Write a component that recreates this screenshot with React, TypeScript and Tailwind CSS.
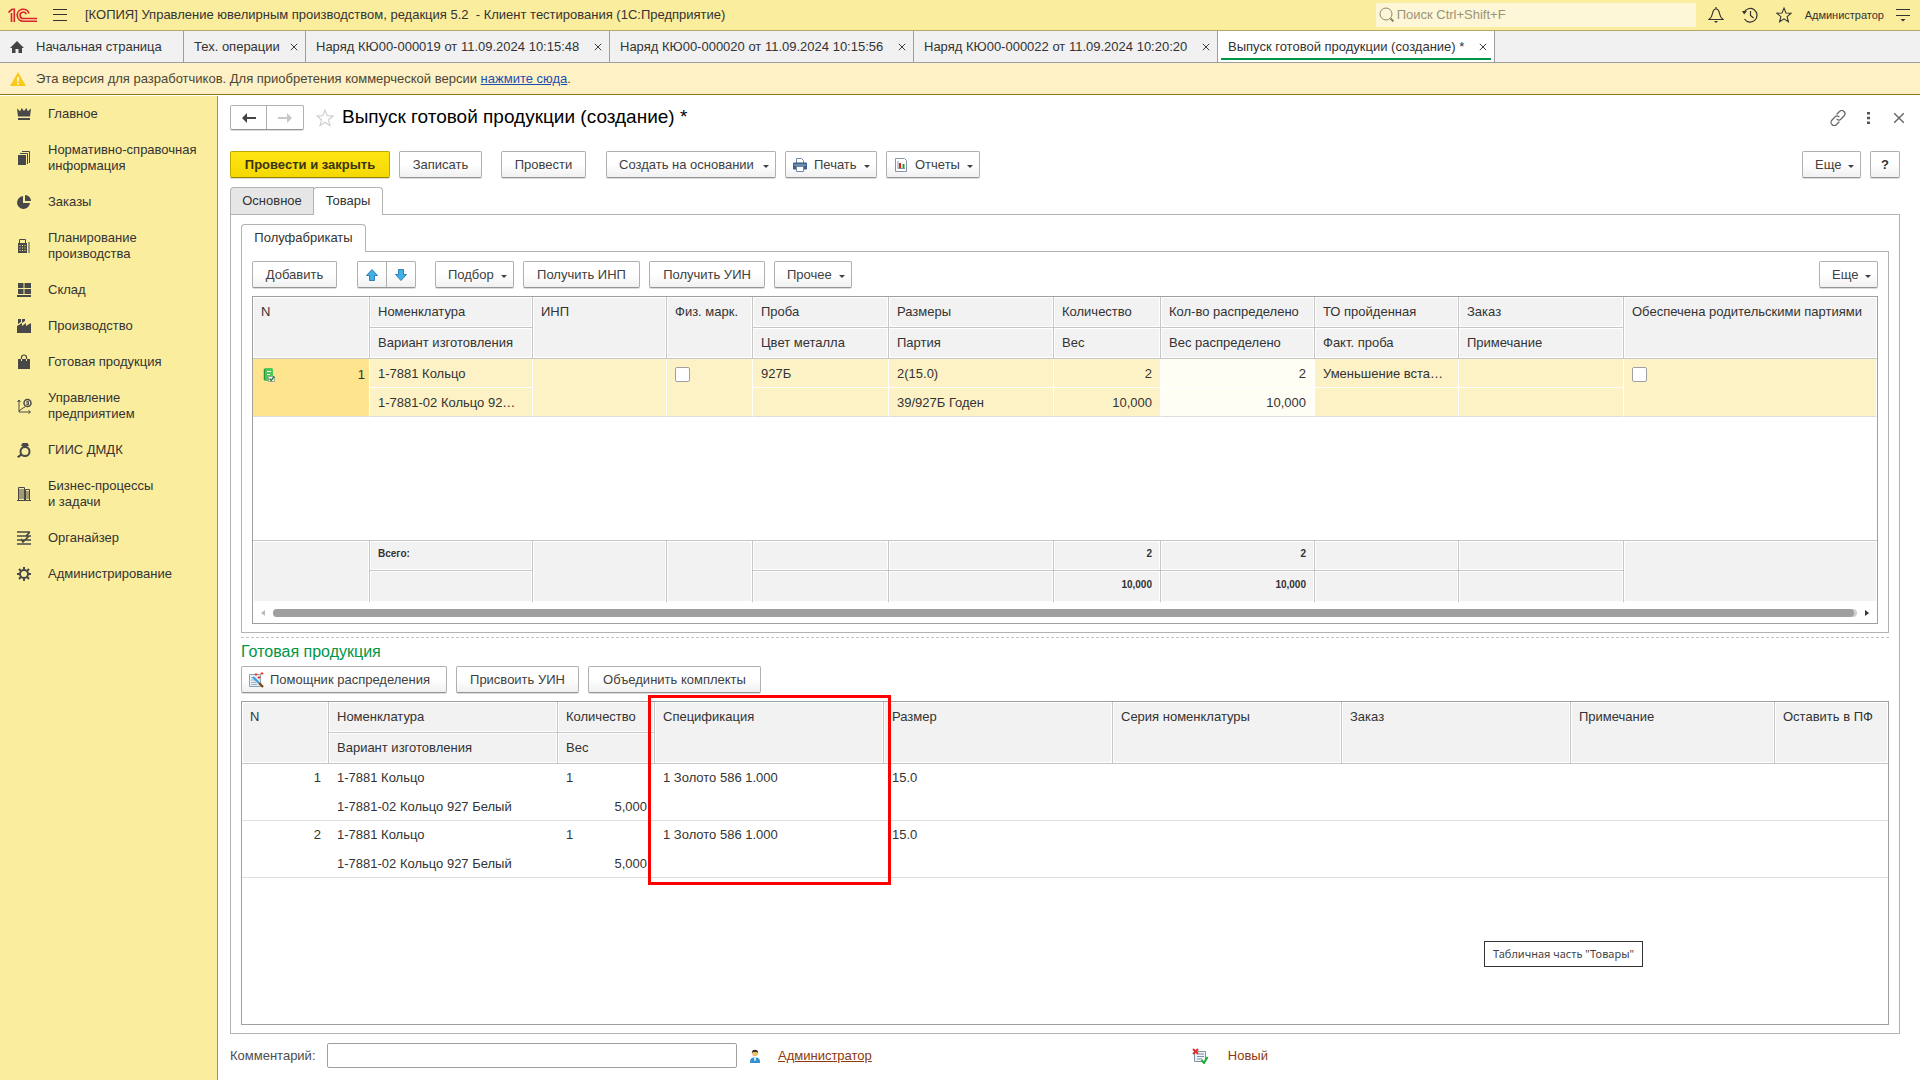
import type { ReactNode } from "react";

const glyphs: Record<string, ReactNode> = {
  crown: <><path d="M0 1.5 3.2 4.2 4.6 1 7 4 9.4 1l1.4 3.2L14 1.5 13 9.5H1z" /><path d="M1 11h12v2H1z" /></>,
  docs: <><path d="M1 4h8v10H1z" /><path d="M3 2.500h7.500V13M5 .500h7.500V12" fill="none" stroke="currentColor" /></>,
  pie: <><path d="M6 1a6.500 6.500 0 1 0 7 7H6z" /><path d="M8 0a6 6 0 0 1 6 6H8z" /></>,
  calc: (
    <>
      <path d="M2.500.500h6v4h-6z" fill="none" stroke="currentColor" />
      <path d="M1 4h9v10H1zM11.500 3h1v11h-1z" />
      <path d="M2.500 6.500h6M2.500 9h6M2.500 11.500h6" stroke="#fbed9e" strokeDasharray="1 1.500" />
    </>
  ),
  store: <path d="M1 0h5.500v5H1zM7.500 0H14v5H7.500zM1 6h5.500v5H1zM7.500 6H14v5H7.500zM0 12h14v2H0z" />,
  factory: <path d="M0 14V7l5-3v3l4-3v3l5-3v10zM1 0h3v3L1 5zM5 0h3v2L5 4z" />,
  bag: <><path d="M1 4h12v10H1z" /><path d="M4.500 4V2.500a2.500 2.500 0 0 1 5 0V4" fill="none" stroke="currentColor" strokeWidth="1.200" /><path d="M4.500 4v2M9.500 4v2" stroke="#fbed9e" /></>,
  plan: (
    <>
      <path d="M2 1v12h11M.500 3 2 1l1.500 2M11.500 11.500 13.500 13l-2 1.500M2 12l4-3 2-1" fill="none" stroke="currentColor" />
      <circle cx="10.500" cy="4" r="3.500" fill="none" stroke="currentColor" strokeWidth="1.500" />
      <path d="M9.500 2.500h2v3h-2M9 4h3" fill="none" stroke="currentColor" />
    </>
  ),
  ring: (
    <>
      <circle cx="8" cy="8.500" r="4.500" fill="none" stroke="currentColor" strokeWidth="2" />
      <path d="M5.500 0h5L12 2.500 8 5 4 2.500zM4 10.500l1.500 1.500L1.500 15 0 13.500z" />
    </>
  ),
  office: (
    <>
      <path d="M1.500.500h6v13h-6zM8.500 2.500h4v11h-4zM0 13.500h14" fill="none" stroke="currentColor" />
      <path d="M2 3h5M2 5h5M2 7h5M2 9h5M2 11h5M9 5h3M9 7h3M9 9h3M9 11h3" stroke="currentColor" />
    </>
  ),
  tasks: <path d="M0 1h13M0 5h14M0 9h14M0 13h14M13 1 9 5M4 8l2 3 6-6" fill="none" stroke="currentColor" strokeWidth="1.700" />,
  gear: (
    <>
      <circle cx="7" cy="7" r="4" fill="none" stroke="currentColor" strokeWidth="2" />
      <path d="M7 0v3M7 11v3M0 7h3M11 7h3M2 2l2 2M10 10l2 2M12 2l-2 2M4 10l-2 2" stroke="currentColor" strokeWidth="2" />
    </>
  ),
};

const sections = [
  { icon: "crown", label: "Главное" },
  { icon: "docs", label: "Нормативно-справочная информация" },
  { icon: "pie", label: "Заказы" },
  { icon: "calc", label: "Планирование производства", wrap: true },
  { icon: "store", label: "Склад" },
  { icon: "factory", label: "Производство" },
  { icon: "bag", label: "Готовая продукция" },
  { icon: "plan", label: "Управление предприятием", wrap: true },
  { icon: "ring", label: "ГИИС ДМДК" },
  { icon: "office", label: "Бизнес-процессы и задачи", wrap: true },
  { icon: "tasks", label: "Органайзер" },
  { icon: "gear", label: "Администрирование" },
];

const openTabs = [
  { label: "Тех. операции", w: "min-w-[122px]" },
  { label: "Наряд КЮ00-000019 от 11.09.2024 10:15:48", w: "min-w-[304px]" },
  { label: "Наряд КЮ00-000020 от 11.09.2024 10:15:56", w: "min-w-[304px]" },
  { label: "Наряд КЮ00-000022 от 11.09.2024 10:20:20", w: "min-w-[304px]" },
];

function Logo() {
  return (
    <svg className="h-4 w-[30px] shrink-0" viewBox="0 0 30 16" fill="none" stroke="#d8232a" strokeWidth="1.600" aria-hidden="true">
      <path d="M.500 5.500 4 2.300h2.300V15M3.500 6v9" />
      <path d="M21 6.500A6 6 0 1 0 15.500 14.200H29" />
      <path d="M18.300 7.200A3.200 3.200 0 1 0 15.500 11.500H29" />
    </svg>
  );
}

function Cross({ className = "" }: { className?: string }) {
  return (
    <svg className={className} viewBox="0 0 10 10" fill="none" stroke="currentColor" strokeWidth="1.200" aria-hidden="true">
      <path d="M1 1l8 8M9 1 1 9" />
    </svg>
  );
}

function Caret() {
  return (
    <svg className="mt-1 ml-1.5 h-[3px] w-1.5" viewBox="0 0 6 3" fill="currentColor" aria-hidden="true">
      <path d="M0 0h6L3 3z" />
    </svg>
  );
}

function Btn({ children, icon, menu, label, w }: { children: ReactNode; icon?: ReactNode; menu?: boolean; label?: string; w: string }) {
  return (
    <button
      type="button"
      aria-label={label}
      className={
        "flex h-[27px] items-center rounded-xs border border-[#b0b0b0] border-b-[#959595] bg-linear-to-b from-white from-50% to-[#f0f0f0] whitespace-nowrap text-[#404040] shadow-[0_1px_0_#dcdcdc] " +
        w +
        (icon ? " pl-1.5" : " pl-3") +
        (menu ? " justify-between pr-1.5" : icon ? " pr-3" : " justify-center pr-3")
      }
    >
      <span className="flex items-center gap-1.5">
        {icon}
        {children}
      </span>
      {menu && <Caret />}
    </button>
  );
}

function PrinterIcon() {
  return (
    <svg className="h-4 w-4" viewBox="0 0 16 16" aria-hidden="true">
      <path d="M4.500 6V1.500h5l2 2V6" fill="#fff" stroke="#6f87a3" />
      <rect x="1" y="5.500" width="14" height="7" rx="1" fill="#3d6189" />
      <path d="M2 8h12" stroke="#9db5cf" />
      <path d="M4.500 9.500h7v5h-7z" fill="#fff" stroke="#6f87a3" />
    </svg>
  );
}

function ReportIcon() {
  return (
    <svg className="h-4 w-4" viewBox="0 0 16 16" aria-hidden="true">
      <path d="M2.500 1.500h9l2 2v11h-11z" fill="#fff" stroke="#8494a5" />
      <path d="M5 4v7.500h7" fill="none" stroke="#8494a5" />
      <path d="M6 6h2v5H6z" fill="#e02020" />
      <path d="M9.500 7h2v4h-2z" fill="#1fa52c" />
    </svg>
  );
}

function WizardIcon() {
  return (
    <svg className="h-4 w-4" viewBox="0 0 16 16" aria-hidden="true">
      <path d="M1.500 2.500h11v12h-11z" fill="#e9f1f7" stroke="#8ba0b3" />
      <path d="M3 5.500h4M3 8h4M3 10.500h5M3 12.500h6" stroke="#9db0c0" />
      <path d="M5 5l6 6" stroke="#3fa0e0" strokeWidth="2.400" />
      <path d="m11 11 4 4" stroke="#7b4a12" strokeWidth="2.400" />
      <path d="M8 1v3M6.500 2.500h3M14 0v3M12.500 1.500h3M11 4v3M9.500 5.500h3" stroke="#ee3a2c" />
    </svg>
  );
}

function ArrowIcon({ down }: { down?: boolean }) {
  return (
    <svg className={down ? "h-3.5 w-3.5 rotate-180" : "h-3.5 w-3.5"} viewBox="0 0 14 14" aria-hidden="true">
      <path d="M7 1.500 12.500 7.500H9.500v5h-5v-5h-3z" fill="#41aee8" stroke="#2f80b5" strokeLinejoin="round" />
    </svg>
  );
}

function RowIcon() {
  return (
    <svg className="ml-0.5 h-4 w-3.5" viewBox="0 0 14 16" aria-hidden="true">
      <rect x="1" y="1" width="9" height="13" rx="1.500" fill="#4fc85a" />
      <path d="M1.500 2v11" stroke="#2c9a3a" strokeWidth="1.500" />
      <path d="M4 4.500h4M4 7.500h3" stroke="#fff" />
      <path d="M5.500 9.500h6v5h-6z" fill="#f3fff3" stroke="#9aa79b" />
      <path d="m6.500 11.500 1.700 2 3-4" fill="none" stroke="#1f7d2c" strokeWidth="1.300" />
    </svg>
  );
}

type Col = { w: string; top: string; bottom?: string };

const goodsCols: Col[] = [
  { w: "w-[117px]", top: "N" },
  { w: "w-[163px]", top: "Номенклатура", bottom: "Вариант изготовления" },
  { w: "w-[134px]", top: "ИНП" },
  { w: "w-[86px]", top: "Физ. марк." },
  { w: "w-[136px]", top: "Проба", bottom: "Цвет металла" },
  { w: "w-[165px]", top: "Размеры", bottom: "Партия" },
  { w: "w-[107px]", top: "Количество", bottom: "Вес" },
  { w: "w-[154px]", top: "Кол-во распределено", bottom: "Вес распределено" },
  { w: "w-[144px]", top: "ТО пройденная", bottom: "Факт. проба" },
  { w: "w-[165px]", top: "Заказ", bottom: "Примечание" },
  { w: "w-[253px]", top: "Обеспечена родительскими партиями" },
];

const productCols: Col[] = [
  { w: "w-[87px]", top: "N" },
  { w: "w-[229px]", top: "Номенклатура", bottom: "Вариант изготовления" },
  { w: "w-[97px]", top: "Количество", bottom: "Вес" },
  { w: "w-[229px]", top: "Спецификация" },
  { w: "w-[229px]", top: "Размер" },
  { w: "w-[229px]", top: "Серия номенклатуры" },
  { w: "w-[229px]", top: "Заказ" },
  { w: "w-[204px]", top: "Примечание" },
  { w: "w-[113px]", top: "Оставить в ПФ" },
];

const headCell =
  "h-[31px] overflow-hidden border-r border-b border-[#c6c6c6] bg-[#f2f2f2] px-2 text-left font-normal whitespace-nowrap shadow-[inset_0_0_0_1px_#fff]";

function Head({ cols }: { cols: Col[] }) {
  return (
    <>
      <colgroup>
        {cols.map((c) => (
          <col key={c.top} className={c.w} />
        ))}
      </colgroup>
      <thead>
        <tr>
          {cols.map((c) =>
            c.bottom ? (
              <th key={c.top} scope="col" className={headCell}>
                {c.top}
              </th>
            ) : (
              <th key={c.top} scope="col" rowSpan={2} className={headCell + " pt-[7px] align-top last:border-r-0"}>
                {c.top}
              </th>
            ),
          )}
        </tr>
        <tr>
          {cols
            .filter((c) => c.bottom)
            .map((c) => (
              <th key={c.top} scope="col" className={headCell}>
                {c.bottom}
              </th>
            ))}
        </tr>
      </thead>
    </>
  );
}

function Cell({ children, right, span, bottom, tone = "bg-[#fdf2c6]", pad = "px-2" }: { children?: ReactNode; right?: boolean; span?: boolean; bottom?: boolean; tone?: string; pad?: string }) {
  return (
    <td
      rowSpan={span ? 2 : 1}
      className={
        "h-[29px] overflow-hidden border-r border-b border-r-white whitespace-nowrap " +
        pad +
        " " +
        tone +
        (right ? " text-right" : "") +
        (span ? " pt-2 align-top" : " pt-0.5") +
        (span || bottom ? " border-b-[#dedede]" : " border-b-white")
      }
    >
      {children}
    </td>
  );
}

function Total({ children, top, span, left }: { children?: ReactNode; top?: boolean; span?: boolean; left?: boolean }) {
  return (
    <td
      rowSpan={span ? 2 : 1}
      className={
        "h-[31px] border-r border-[#c6c6c6] bg-[#f2f2f2] px-2 pb-1 text-[10px] font-bold shadow-[inset_0_0_0_1px_#fff] " +
        (left ? "text-left" : "text-right") +
        (top || span ? " border-t" : "") +
        (top ? " border-b" : "") +
        (span ? " last:border-r-0" : "")
      }
    >
      {children}
    </td>
  );
}

function GoodsTable() {
  const box = "block h-[15px] w-[15px] appearance-none rounded-xs border border-[#a0a0a0] bg-white";
  return (
    <div className="flex flex-col border border-[#a0a0a0] pb-1.5">
      <table className="w-full table-fixed border-separate border-spacing-0">
        <Head cols={goodsCols} />
        <tbody>
          <tr>
            <Cell span tone="bg-[#ffe48f]" pad="pl-2 pr-1">
              <span className="flex justify-between">
                <RowIcon />1
              </span>
            </Cell>
            <Cell>1-7881 Кольцо</Cell>
            <Cell span />
            <Cell span>
              <input type="checkbox" aria-label="Физ. марк." className={box} />
            </Cell>
            <Cell>927Б</Cell>
            <Cell>2(15.0)</Cell>
            <Cell right>2</Cell>
            <Cell right tone="bg-[#fffef4]">2</Cell>
            <Cell>Уменьшение вста…</Cell>
            <Cell />
            <Cell span>
              <input type="checkbox" aria-label="Обеспечена родительскими партиями" className={box} />
            </Cell>
          </tr>
          <tr>
            <Cell bottom>1-7881-02 Кольцо 92…</Cell>
            <Cell bottom />
            <Cell bottom>39/927Б Годен</Cell>
            <Cell bottom right>10,000</Cell>
            <Cell bottom right tone="bg-[#fffef4]">10,000</Cell>
            <Cell bottom />
            <Cell bottom />
          </tr>
          <tr>
            <td colSpan={11} className="h-[123px]" />
          </tr>
        </tbody>
        <tfoot>
          <tr>
            <Total span />
            <Total top left>Всего:</Total>
            <Total span />
            <Total span />
            <Total top />
            <Total top />
            <Total top>2</Total>
            <Total top>2</Total>
            <Total top />
            <Total top />
            <Total span />
          </tr>
          <tr>
            <Total />
            <Total />
            <Total />
            <Total>10,000</Total>
            <Total>10,000</Total>
            <Total />
            <Total />
          </tr>
        </tfoot>
      </table>
      <div className="mt-[7px] flex h-2 items-center gap-2 px-2">
        <svg className="h-1.5 w-1" viewBox="0 0 4 6" fill="#bbb" aria-hidden="true"><path d="M4 0v6L0 3z" /></svg>
        <div className="h-2 flex-1 rounded-full bg-[#cfcfcf] pr-[3px]">
          <div className="h-2 rounded-full bg-[#9f9f9f]" />
        </div>
        <svg className="h-1.5 w-1" viewBox="0 0 4 6" fill="#333" aria-hidden="true"><path d="M0 0v6l4-3z" /></svg>
      </div>
    </div>
  );
}

function ProductTable() {
  return (
    <div className="relative flex-1 border border-[#a0a0a0]">
      <table className="w-full table-fixed border-separate border-spacing-0">
        <Head cols={productCols} />
        <tbody>
          {[1, 2].map((n) => (
            <tr key={n} className="align-top">
              <td className="h-[57px] border-b border-[#dedede] px-2 pt-1.5 text-right">{n}</td>
              <td className="border-b border-[#dedede] px-2 pt-1.5">
                <div>1-7881 Кольцо</div>
                <div className="mt-[13px]">1-7881-02 Кольцо 927 Белый</div>
              </td>
              <td className="border-b border-[#dedede] px-2 pt-1.5">
                <div>1</div>
                <div className="mt-[13px] text-right">5,000</div>
              </td>
              <td className="border-b border-[#dedede] px-2 pt-1.5">1 Золото 586 1.000</td>
              <td className="border-b border-[#dedede] px-2 pt-1.5">15.0</td>
              <td className="border-b border-[#dedede]" />
              <td className="border-b border-[#dedede]" />
              <td className="border-b border-[#dedede]" />
              <td className="border-b border-[#dedede]" />
            </tr>
          ))}
        </tbody>
      </table>
      <div className="pointer-events-none absolute top-[-7px] left-[24.650%] h-[190px] w-[14.800%] border-3 border-[#ff0000]" />
      <div role="tooltip" className="absolute right-[245px] bottom-[57px] border border-[#333] bg-white px-2 py-[3px] font-['Noto_Sans',sans-serif] text-[11px] leading-[18px] text-[#444]">
        Табличная часть "Товары"
      </div>
    </div>
  );
}

function TopBar() {
  return (
    <header className="flex h-[31px] items-center border-b border-[#b3a866] bg-[#fbed9e] pr-2.5 pl-2 text-[#333]">
      <Logo />
      <button type="button" aria-label="Меню" className="ml-[15px]">
        <svg className="h-3.5 w-3.5" viewBox="0 0 14 14" stroke="#333" aria-hidden="true"><path d="M0 1.500h14M0 6.500h14M0 12.500h14" /></svg>
      </button>
      <div className="ml-[18px] flex-1 whitespace-pre">[КОПИЯ] Управление ювелирным производством, редакция 5.2  - Клиент тестирования (1С:Предприятие)</div>
      <label className="flex h-6 w-80 items-center rounded-xs bg-[#fdf7d7] pl-[3px]">
        <svg className="h-4 w-4" viewBox="0 0 16 16" fill="none" stroke="#8d876b" aria-hidden="true">
          <circle cx="7" cy="7" r="6" />
          <path d="m11.500 11.500 3 3" strokeWidth="2" />
        </svg>
        <input type="search" aria-label="Поиск" placeholder="Поиск Ctrl+Shift+F" className="ml-0.5 min-w-0 flex-1 bg-transparent outline-none placeholder:text-[#9a9479]" />
      </label>
      <button type="button" aria-label="Уведомления" className="ml-3">
        <svg className="h-4 w-4" viewBox="0 0 16 16" fill="none" stroke="#333" strokeWidth="1.200" aria-hidden="true">
          <path d="M1 12.500c2.500-2 3-3 3.500-6C5 3.500 6 2 8 2s3 1.500 3.500 4.500c.500 3 1 4 3.500 6zM8 0v2" />
          <path d="M6 14h4l-2 2z" fill="#333" stroke="none" />
        </svg>
      </button>
      <button type="button" aria-label="История" className="ml-[18px]">
        <svg className="h-4 w-4" viewBox="0 0 16 16" fill="none" stroke="#333" strokeWidth="1.200" aria-hidden="true">
          <path d="M2 5.500A6.800 6.800 0 1 1 2.500 12M8.500 4v4.500l3 2.500" />
          <path d="M0 4h5L2.200 7.500z" fill="#333" stroke="none" />
        </svg>
      </button>
      <button type="button" aria-label="Избранное" className="ml-[18px]">
        <Star className="h-4 w-4 text-[#333]" />
      </button>
      <button type="button" className="ml-[13px] text-[11px]">Администратор</button>
      <button type="button" aria-label="Настройки" className="ml-3">
        <svg className="h-3.5 w-3.5" viewBox="0 0 14 14" stroke="#333" aria-hidden="true">
          <path d="M0 1.500h14M0 7.500h14" />
          <path d="M4.500 11h5L7 13.500z" fill="#333" stroke="none" />
        </svg>
      </button>
    </header>
  );
}

function Star({ className }: { className: string }) {
  return (
    <svg className={className} viewBox="0 0 18 18" fill="none" stroke="currentColor" strokeWidth="1.200" aria-hidden="true">
      <path d="m9 1.200 2.200 5.500 5.800.300-4.500 3.800 1.500 5.800L9 13.300l-5 3.300 1.500-5.800L1 7l5.800-.300z" />
    </svg>
  );
}

function WindowTabs() {
  return (
    <nav className="flex h-8 border-b border-[#9d9d9d] bg-[#f1f1f1] whitespace-nowrap text-[#333]">
      <button type="button" className="flex min-w-[184px] items-center border-r border-[#9d9d9d] pr-4 pl-2.5">
        <svg className="mr-3 h-3.5 w-3.5" viewBox="0 0 14 14" fill="#444" aria-hidden="true">
          <path d="M7 1 0 8h2v5h3.500V9h3v4H12V8h2z" />
        </svg>
        Начальная страница
      </button>
      {openTabs.map((t) => (
        <div key={t.label} className={"flex items-center justify-between border-r border-[#9d9d9d] pr-[7px] pl-2.5 " + t.w}>
          <span>{t.label}</span>
          <button type="button" aria-label="Закрыть вкладку" className="ml-2"><Cross className="h-2 w-2" /></button>
        </div>
      ))}
      <div className="flex min-w-[277px] border-r border-[#9d9d9d] bg-white px-[3px] pb-0.5">
        <div className="flex flex-1 items-center justify-between border-b-2 border-[#009646] pt-1 pr-1 pl-[7px]">
          <span>Выпуск готовой продукции (создание) *</span>
          <button type="button" aria-label="Закрыть вкладку" className="ml-2"><Cross className="h-2 w-2" /></button>
        </div>
      </div>
    </nav>
  );
}

export default function App() {
  return (
    <div className="flex min-h-screen flex-col bg-white font-['Liberation_Sans',Arial,sans-serif] text-[13px] leading-4 text-[#333]">
      <TopBar />
      <WindowTabs />
      <div className="flex h-8 items-center border-b border-[#8f7717] bg-[#fdf1c5] pl-2.5 text-[#4d4633]">
        <svg className="mr-2.5 h-3.5 w-4" viewBox="0 0 16 14" aria-hidden="true">
          <path d="M8 0 16 14H0z" fill="#fbc91b" />
          <path d="M8 5v4.500M8 10.800v1.700" stroke="#fff" strokeWidth="1.600" />
        </svg>
        <span>
          Эта версия для разработчиков. Для приобретения коммерческой версии{" "}
          <a href="#buy" className="text-[#1a4fb0] underline">нажмите сюда</a>.
        </span>
      </div>

      <div className="flex flex-1 pt-px">
        <aside className="w-[218px] shrink-0 border-r border-[#9c9465] bg-[#fbed9e]">
          <ul>
            {sections.map((s) => (
              <li key={s.label}>
                <button type="button" className="flex w-full items-center gap-[17px] py-2.5 pr-3 pl-[17px] text-left">
                  <svg className="h-3.5 w-3.5 shrink-0 overflow-visible text-[#484848]" viewBox="0 0 14 14" fill="currentColor" aria-hidden="true">{glyphs[s.icon]}</svg>
                  <span className={s.wrap ? "w-28" : ""}>{s.label}</span>
                </button>
              </li>
            ))}
          </ul>
        </aside>

        <main className="flex min-w-0 flex-1 flex-col pt-[9px] pr-5 pb-3 pl-3">
          <div className="-mr-[5px] flex h-[25px] items-center">
            <div className="flex h-[25px] rounded-xs border border-[#b0b0b0] border-b-[#959595] shadow-[0_1px_0_#dcdcdc]">
              <button type="button" aria-label="Назад" className="flex w-9 items-center justify-center border-r border-[#b0b0b0] text-[#444]">
                <svg className="h-3 w-3.5" viewBox="0 0 14 12" aria-hidden="true"><path d="M0 6l5-5v4h9v2H5v4z" fill="currentColor" /></svg>
              </button>
              <button type="button" aria-label="Вперед" className="flex w-9 items-center justify-center text-[#c8c8c8]">
                <svg className="h-3 w-3.5" viewBox="0 0 14 12" aria-hidden="true"><path d="M14 6 9 1v4H0v2h9v4z" fill="currentColor" /></svg>
              </button>
            </div>
            <button type="button" aria-label="В избранное" className="ml-3"><Star className="h-[18px] w-[18px] text-[#d0d0d0]" /></button>
            <h1 className="ml-2 flex-1 pb-0.5 text-[19px] leading-6 text-black">Выпуск готовой продукции (создание) *</h1>
            <button type="button" aria-label="Ссылка" className="text-[#666]">
              <svg className="h-4 w-4" viewBox="0 0 16 16" fill="none" stroke="currentColor" strokeWidth="1.200" strokeLinecap="round" aria-hidden="true">
                <path d="M7 4l2.500-2.500a3 3 0 0 1 4.500 4.500L11 9a3 3 0 0 1-4 .300M9 12l-2.500 2.500A3 3 0 0 1 2 10l3-3a3 3 0 0 1 4-.300" />
              </svg>
            </button>
            <button type="button" aria-label="Дополнительно" className="ml-[21px] text-[#555]">
              <svg className="h-3 w-[3px]" viewBox="0 0 3 12" fill="currentColor" aria-hidden="true"><path d="M0 0h3v2.500H0zM0 4.700h3v2.500H0zM0 9.400h3V12H0z" /></svg>
            </button>
            <button type="button" aria-label="Закрыть" className="ml-[23px] text-[#666]"><Cross className="h-3 w-3" /></button>
          </div>

          <div className="mt-[21px] flex">
            <button type="button" className="h-[27px] min-w-40 rounded-xs border border-[#c0a800] border-b-[#988500] bg-linear-to-b from-[#ffe514] to-[#f5d800] px-2.5 font-bold text-[#3a3412] shadow-[0_1px_0_#dcdcdc]">
              Провести и закрыть
            </button>
            <div className="ml-[9px]"><Btn w="min-w-[83px]">Записать</Btn></div>
            <div className="ml-[19px]"><Btn w="min-w-[85px]">Провести</Btn></div>
            <div className="ml-5 flex gap-[9px]">
              <Btn menu w="min-w-[170px]">Создать на основании</Btn>
              <Btn menu w="min-w-[92px]" icon={<PrinterIcon />}>Печать</Btn>
              <Btn menu w="min-w-[94px]" icon={<ReportIcon />}>Отчеты</Btn>
            </div>
            <div className="ml-auto flex gap-[9px]">
              <Btn menu w="min-w-[59px]">Еще</Btn>
              <button type="button" aria-label="Справка" className="h-[27px] w-[30px] rounded-xs border border-[#b0b0b0] border-b-[#959595] bg-linear-to-b from-white from-50% to-[#f0f0f0] font-bold text-[#333] shadow-[0_1px_0_#dcdcdc]">?</button>
            </div>
          </div>

          <div className="mt-[9px] flex" role="tablist">
            <button type="button" role="tab" aria-selected="false" className="h-[27px] min-w-[84px] rounded-tl-sm border border-b-0 border-[#b3b3b3] bg-[#e6e6e6] px-[11px]">Основное</button>
            <button type="button" role="tab" aria-selected="true" className="relative -mb-px -ml-px h-7 min-w-[70px] rounded-t-sm border border-b-0 border-[#b3b3b3] bg-white px-[11px] pb-0.5">Товары</button>
          </div>

          <section className="flex flex-1 flex-col border border-[#b3b3b3] px-2.5 pt-[9px] pb-2">
            <div className="flex" role="tablist">
              <button type="button" role="tab" aria-selected="true" className="relative -mb-px h-7 min-w-[125px] rounded-t-sm border border-b-0 border-[#b3b3b3] bg-white px-[11px] pb-0.5">Полуфабрикаты</button>
            </div>
            <div className="border border-[#b3b3b3] px-2.5 pt-[9px] pb-2">
              <div className="mb-2 flex">
                <Btn w="min-w-[85px]">Добавить</Btn>
                <div className="ml-5 flex h-[27px] rounded-xs border border-[#b0b0b0] border-b-[#959595] bg-linear-to-b from-white from-50% to-[#f0f0f0] shadow-[0_1px_0_#dcdcdc]">
                  <button type="button" aria-label="Переместить вверх" className="flex w-[29px] items-center justify-center border-r border-[#b0b0b0]"><ArrowIcon /></button>
                  <button type="button" aria-label="Переместить вниз" className="flex w-7 items-center justify-center"><ArrowIcon down /></button>
                </div>
                <div className="ml-[19px] flex gap-[9px]">
                  <Btn menu w="min-w-[79px]">Подбор</Btn>
                  <Btn w="min-w-[117px]">Получить ИНП</Btn>
                  <Btn w="min-w-[116px]">Получить УИН</Btn>
                  <Btn menu w="min-w-[78px]">Прочее</Btn>
                </div>
                <div className="ml-auto"><Btn menu w="min-w-[59px]">Еще</Btn></div>
              </div>
              <GoodsTable />
            </div>

            <div className="mt-1 border-t border-dashed border-[#c4c4c4]" />
            <h2 className="mt-1 text-base leading-5 text-[#009646]">Готовая продукция</h2>
            <div className="mt-1 mb-2 flex gap-[9px]">
              <Btn w="min-w-[206px]" icon={<WizardIcon />}>Помощник распределения</Btn>
              <Btn w="min-w-[123px]">Присвоить УИН</Btn>
              <Btn w="min-w-[173px]">Объединить комплекты</Btn>
            </div>
            <ProductTable />
          </section>

          <div className="mt-[9px] flex h-[25px] items-center">
            <label htmlFor="comment" className="w-[97px] text-[#4d4d4d]">Комментарий:</label>
            <input id="comment" type="text" className="h-[25px] w-[410px] rounded-xs border border-[#a0a0a0] px-2" />
            <svg className="ml-3 h-3.5 w-3" viewBox="0 0 12 14" aria-hidden="true">
              <path d="M1 14c0-4 1-5.500 5-5.500s5 1.500 5 5.500z" fill="#3191cf" />
              <path d="M5 8.500h2L6.500 12h-1z" fill="#fff" />
              <circle cx="6" cy="4.500" r="2.800" fill="#f0bd6c" />
              <path d="M2.800 4.500C2.800 1.500 4 .700 6 .700s3.200.800 3.200 3.800L8 3H4z" fill="#3c3320" />
            </svg>
            <a href="#user" className="ml-[17px] text-[#8c3a0c] underline">Администратор</a>
            <div className="ml-80 flex items-center text-[#8c3a0c]">
              <svg className="mr-5 h-4 w-4" viewBox="0 0 16 16" aria-hidden="true">
                <path d="M2.500 3.500h11v10h-11z" fill="#eef3f7" stroke="#8094a6" />
                <path d="M6 6h6M5 8.500h7M5 11h5" stroke="#8094a6" />
                <path d="m1 1 5 5M6 1 1 6" stroke="#e03030" strokeWidth="2" />
                <path d="m9.500 12 2.500 3 3.500-6" fill="none" stroke="#1fae35" strokeWidth="2" />
              </svg>
              Новый
            </div>
          </div>
        </main>
      </div>
    </div>
  );
}
